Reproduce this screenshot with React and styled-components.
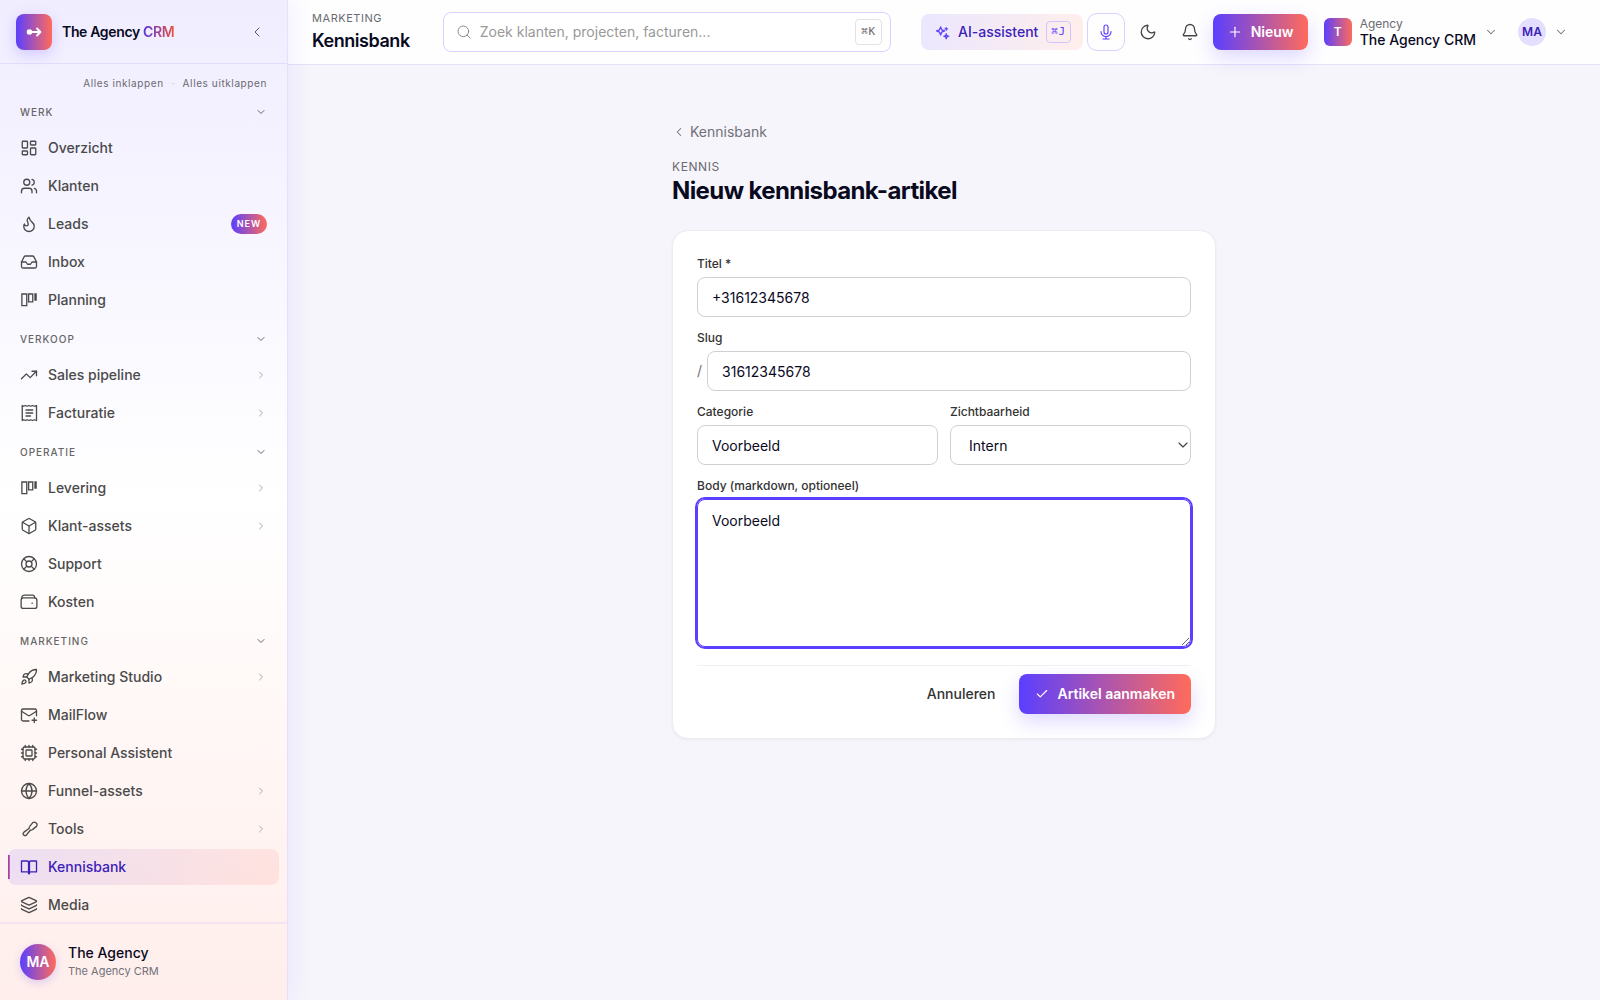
import React from "react";
import styled, { createGlobalStyle, css } from "styled-components";
import {
  Bell,
  Box,
  Check,
  ChevronDown,
  ChevronLeft,
  ChevronRight,
  Cpu,
  Flame,
  Globe,
  Inbox,
  Layers,
  LayoutDashboard,
  LifeBuoy,
  MailPlus,
  Moon,
  Plus,
  Rocket,
  Search,
  TrendingUp,
  Users,
} from "lucide-react";

const GlobalStyle = createGlobalStyle`
  *, *::before, *::after { box-sizing: border-box; }
  body {
    margin: 0;
    background: #f6f5fb;
    color: #0a0a1f;
    font-family: Inter, "Liberation Sans", sans-serif;
    font-size: 14px;
    line-height: 20px;
    -webkit-font-smoothing: antialiased;
  }
  button, input, select, textarea { font: inherit; color: inherit; margin: 0; }
  button { cursor: pointer; background: none; border: 0; padding: 0; }
  a { color: inherit; text-decoration: none; }
  svg { display: block; flex-shrink: 0; }
`;

const brand = "linear-gradient(90deg, #5b3fff 0%, #ff6b5b 100%)";

/* ---------- drawn icons ---------- */

function Glyph({ size = 18, strokeWidth = 1.5, children }) {
  return (
    <svg width={size} height={size} viewBox="0 0 24 24" fill="none" stroke="currentColor" strokeWidth={strokeWidth} strokeLinecap="round" strokeLinejoin="round" aria-hidden="true">
      {children}
    </svg>
  );
}

const Kanban = (p) => (
  <Glyph {...p}>
    <path d="M2.5 4h6.5v15.500h-6.500zM11.500 4h5.500v10.500h-5.500zM20 4h1.500v8h-1.500z" strokeLinejoin="miter" />
  </Glyph>
);

const Receipt = (p) => (
  <Glyph {...p}>
    <path d="M3 2l2 1 2.3-1 2.3 1L12 2l2.3 1 2.3-1 2.3 1L22 2v20l-3-1-2.3 1-2.4-1-2.3 1-2.4-1-2.3 1L5 21l-2 1z" />
    <path d="M8 8h9M8 12h9M8 16h6" />
  </Glyph>
);

const Wallet = (p) => (
  <Glyph {...p}>
    <rect x="1.500" y="6.500" width="21" height="14" rx="3" />
    <path d="M2.500 7A3.500 3.500 0 0 1 5.500 2.800h11A3 3 0 0 1 19.500 6.500M16 13.500h.5" />
  </Glyph>
);

const Tool = (p) => (
  <Glyph {...p}>
    <path d="M13 8.500l4-5a3.600 3.600 0 0 1 5 5l-5 4a3 3 0 0 1-3 .8L8.500 20a2.200 2.200 0 0 1-3.500-3.500l7.300-5.500a3 3 0 0 1 .7-2.500z" />
  </Glyph>
);

const Book = (p) => (
  <Glyph {...p}>
    <path d="M2 4h7.500a2.500 2.500 0 0 1 2.500 1.500 2.500 2.500 0 0 1 2.500-1.500H22v14.500h-7.500a2.500 2.500 0 0 0-2.500 1.500 2.500 2.500 0 0 0-2.500-1.500H2z" />
    <path d="M12 5.500v15" strokeWidth="3" />
  </Glyph>
);

const Sparkle = (p) => (
  <Glyph {...p}>
    <path d="M9 3l1.800 4.700L15.500 9.500l-4.700 1.800L9 16l-1.800-4.700L2.500 9.500l4.700-1.800z" />
    <path d="M18 14l1 3 3 1-3 1-1 3-1-3-3-1 3-1zM18 4v4M16 6h4" />
  </Glyph>
);

const Mic = (p) => (
  <Glyph {...p}>
    <rect x="9" y="1.500" width="6" height="13.500" rx="3" />
    <path d="M4.500 11.500a7.500 7.500 0 0 0 15 0M12 19v3.500M7.500 22.500h9" />
  </Glyph>
);

/* ---------- shell ---------- */

const Shell = styled.div`
  display: grid;
  grid-template-columns: 288px minmax(0, 1fr);
  height: 100vh;
`;

const Sidebar = styled.aside`
  z-index: 1;
  display: flex;
  flex-direction: column;
  min-height: 0;
  border-right: 1px solid #e6e0fd;
  background: linear-gradient(180deg, #f0edff 0%, #ffffff 50%, #ffeeeb 100%);
  box-shadow: 4px 0 24px rgba(91, 63, 255, 0.08);
`;

const BrandBar = styled.div`
  display: flex;
  align-items: center;
  gap: 10px;
  flex: none;
  height: 64px;
  padding: 0 24px 0 16px;
  border-bottom: 1px solid #e2dcff;
`;

const LogoTile = styled.span`
  display: grid;
  place-items: center;
  width: 36px;
  height: 36px;
  border-radius: 8px;
  background: ${brand};
  color: #fff;
  box-shadow: 0 4px 14px rgba(91, 63, 255, 0.22);
`;

const BrandName = styled.span`
  flex: 1;
  font-weight: 600;
  letter-spacing: -0.025em;
  span {
    background: linear-gradient(90deg, #5235e0, #e8533f);
    background-clip: text;
    color: transparent;
  }
`;

const CollapseButton = styled.button`
  display: grid;
  place-items: center;
  width: 14px;
  height: 24px;
  color: #555;
`;

const Nav = styled.nav`
  flex: 1;
  min-height: 0;
  overflow: hidden;
  padding: 0 8px;
`;

const FoldLinks = styled.div`
  display: flex;
  justify-content: flex-end;
  gap: 8px;
  padding: 12px 12px 8px;
  color: #c9c4d8;
  font-size: 10px;
  line-height: 14px;
  button {
    color: #6a6a70;
    letter-spacing: 0.06em;
  }
`;

const Section = styled.section`
  & + & {
    margin-top: 7px;
  }
`;

const SectionToggle = styled.button`
  display: flex;
  align-items: center;
  justify-content: space-between;
  width: 100%;
  height: 28px;
  margin-bottom: 4px;
  padding: 0 12px;
  color: #666;
  font-size: 10px;
  font-weight: 500;
  letter-spacing: 0.1em;
  text-transform: uppercase;
`;

const Items = styled.ul`
  display: grid;
  gap: 2px;
  margin: 0;
  padding: 0;
  list-style: none;
`;

const Item = styled.a`
  display: flex;
  align-items: center;
  gap: 10px;
  height: 36px;
  padding: 0 12px;
  border-radius: 8px;
  color: #4a4a4a;
  font-weight: 500;

  ${(p) =>
    p.$active &&
    css`
      position: relative;
      color: #3b22b8;
      background: linear-gradient(100deg, rgba(91, 63, 255, 0.11), rgba(255, 107, 91, 0.12));
      &::before {
        content: "";
        position: absolute;
        left: 0;
        top: 6px;
        bottom: 6px;
        width: 2px;
        background: ${brand};
      }
    `}
`;

const ItemLabel = styled.span`
  flex: 1;
`;

const ItemChevron = styled(ChevronRight)`
  color: #aaa;
`;

const NewBadge = styled.span`
  height: 20px;
  padding: 0 6px;
  border-radius: 10px;
  background: ${brand};
  color: #fff;
  font-size: 9px;
  font-weight: 600;
  letter-spacing: 0.1em;
`;

const Account = styled.div`
  display: flex;
  align-items: center;
  gap: 12px;
  flex: none;
  height: 78px;
  padding: 0 20px;
  border-top: 2px solid #f5e4f0;
`;

const Avatar = styled.span`
  display: grid;
  place-items: center;
  width: 36px;
  height: 36px;
  border-radius: 50%;
  background: ${brand};
  color: #fff;
  font-weight: 600;
  box-shadow: 0 3px 10px rgba(91, 63, 255, 0.2);
`;

const AccountText = styled.div`
  display: grid;
  font-weight: 500;
  line-height: 18px;
  small {
    color: #71717a;
    font-size: 11px;
    font-weight: 400;
  }
`;

/* ---------- top bar ---------- */

const Column = styled.div`
  display: flex;
  flex-direction: column;
  min-width: 0;
`;

const TopBar = styled.header`
  display: flex;
  align-items: center;
  flex: none;
  height: 65px;
  padding: 0 24px;
  border-bottom: 1px solid #e6e2fb;
  background: #fefeff;
`;

const Crumb = styled.div`
  margin-right: 33px;
`;

const Eyebrow = styled.p`
  margin: 0;
  color: #6a6a70;
  font-size: ${(p) => (p.$small ? 11 : 12)}px;
  line-height: 18px;
  letter-spacing: 0.05em;
  text-transform: uppercase;
`;

const CrumbTitle = styled.p`
  margin: 0;
  font-size: 18px;
  font-weight: 600;
  line-height: 28px;
  letter-spacing: -0.025em;
`;

const SearchBox = styled.label`
  display: flex;
  align-items: center;
  gap: 8px;
  flex: 0 1 448px;
  height: 40px;
  padding: 0 8px 0 12px;
  border: 1px solid #d9d1ff;
  border-radius: 8px;
  background: #fff;
  color: #8c8c92;
  input {
    flex: 1;
    min-width: 0;
    padding: 0;
    border: 0;
    outline: 0;
    background: transparent;
  }
  input::placeholder {
    color: #999;
    opacity: 1;
  }
`;

const Kbd = styled.kbd`
  display: grid;
  place-items: center;
  height: ${(p) => (p.$tinted ? 22 : 26)}px;
  padding: 0 ${(p) => (p.$tinted ? 4 : 5)}px;
  border: 1px solid ${(p) => (p.$tinted ? "#cfc6fb" : "#e2e2e6")};
  border-radius: 4px;
  color: ${(p) => (p.$tinted ? "#5b3fff" : "#666")};
  font-family: "DejaVu Sans Mono", "Liberation Mono", monospace;
  font-size: 11px;
  line-height: 16px;
  letter-spacing: 0.05em;
`;

const Actions = styled.div`
  display: flex;
  align-items: center;
  gap: 4px;
  margin-left: auto;
`;

const AssistantButton = styled.button`
  display: flex;
  align-items: center;
  gap: 8px;
  height: 36px;
  padding: 0 12px 0 14px;
  border-radius: 8px;
  background: linear-gradient(100deg, #ebe7ff, #ffeeeb);
  color: #3b22b8;
  font-weight: 500;
  svg { color: #5b3fff; }
`;

const IconButton = styled.button`
  display: grid;
  place-items: center;
  width: 38px;
  height: 38px;
  border: 1px solid ${(p) => (p.$outlined ? "#d9d1ff" : "transparent")};
  border-radius: 10px;
  color: ${(p) => (p.$outlined ? "#5b3fff" : "#444")};
`;

const PrimaryButton = styled.button`
  display: flex;
  align-items: center;
  gap: 8px;
  height: ${(p) => (p.$large ? 40 : 36)}px;
  padding: 0 ${(p) => (p.$large ? 16 : 14)}px;
  border-radius: 8px;
  background: ${brand};
  color: #fff;
  font-weight: 600;
  box-shadow: 0 8px 20px rgba(91, 63, 255, 0.2);
`;

const MenuButton = styled.button`
  display: flex;
  align-items: center;
  gap: 8px;
  padding: 0 8px;
  text-align: left;
  svg { color: #71717a; }
`;

const TenantButton = styled(MenuButton)`
  margin-left: 4px;
`;

const TenantTile = styled.span`
  display: grid;
  place-items: center;
  width: 28px;
  height: 28px;
  border-radius: 6px;
  background: ${brand};
  color: #fff;
  font-size: 12px;
  font-weight: 600;
`;

const TenantText = styled.span`
  display: grid;
  font-weight: 500;
  line-height: 16px;
  small {
    color: #6a6a70;
    font-size: 12px;
    font-weight: 400;
  }
`;

const UserTile = styled(TenantTile)`
  border-radius: 50%;
  background: #e4deff;
  color: #3b22b8;
`;

/* ---------- form page ---------- */

const Page = styled.main`
  width: 100%;
  max-width: 544px;
  margin: 0 auto;
  padding-top: 57px;
`;

const BackLink = styled.a`
  display: inline-flex;
  align-items: center;
  gap: 4px;
  margin-bottom: 16px;
  color: #71717a;
`;

const PageTitle = styled.h1`
  margin: 0 0 24px;
  font-size: 24px;
  font-weight: 700;
  line-height: 30px;
  letter-spacing: -0.025em;
`;

const Card = styled.form`
  display: grid;
  gap: 12px;
  padding: 24px;
  border: 1px solid #ececf1;
  border-radius: 16px;
  background: #fff;
  box-shadow: 0 1px 3px rgba(10, 10, 31, 0.05);
`;

const FieldGroup = styled.div`
  display: grid;
  gap: 4px;
`;

const FieldRow = styled.div`
  display: grid;
  grid-template-columns: 1fr 1fr;
  gap: 12px;
`;

const Label = styled.label`
  color: #333;
  font-size: 12px;
  font-weight: 500;
  line-height: 18px;
`;

const control = css`
  width: 100%;
  border: 1px solid #d0d0d5;
  border-radius: 8px;
  background: #fff;
  outline: 0;
`;

const TextInput = styled.input`
  ${control}
  height: 40px;
  padding: 0 14px;
`;

const SlugRow = styled.div`
  display: flex;
  align-items: center;
  gap: 5px;
  color: #71717a;
  input { color: #0a0a1f; }
`;

const SelectWrap = styled.div`
  display: grid;
  align-items: center;
  > * { grid-area: 1 / 1; }
  svg {
    justify-self: end;
    color: #444;
    pointer-events: none;
  }
`;

const Select = styled.select`
  ${control}
  height: 40px;
  padding: 1px 18px 0;
  appearance: none;
`;

const TextArea = styled.textarea`
  ${control}
  display: block;
  height: 148px;
  padding: 11px 14px;
  resize: vertical;
  border-color: #5b3fff;
  outline: 2px solid #5b3fff;
`;

const FormActions = styled.div`
  display: flex;
  justify-content: flex-end;
  gap: 8px;
  margin-top: 6px;
  padding-top: 8px;
  border-top: 1px solid #f1f1f4;
`;

const GhostButton = styled.button`
  height: 40px;
  padding: 0 16px;
  color: #333;
  font-weight: 500;
`;

const sections = [
  {
    title: "Werk",
    items: [
      { label: "Overzicht", icon: LayoutDashboard },
      { label: "Klanten", icon: Users },
      { label: "Leads", icon: Flame, badge: "NEW" },
      { label: "Inbox", icon: Inbox },
      { label: "Planning", icon: Kanban },
    ],
  },
  {
    title: "Verkoop",
    items: [
      { label: "Sales pipeline", icon: TrendingUp, more: true },
      { label: "Facturatie", icon: Receipt, more: true },
    ],
  },
  {
    title: "Operatie",
    items: [
      { label: "Levering", icon: Kanban, more: true },
      { label: "Klant-assets", icon: Box, more: true },
      { label: "Support", icon: LifeBuoy },
      { label: "Kosten", icon: Wallet },
    ],
  },
  {
    title: "Marketing",
    items: [
      { label: "Marketing Studio", icon: Rocket, more: true },
      { label: "MailFlow", icon: MailPlus },
      { label: "Personal Assistent", icon: Cpu },
      { label: "Funnel-assets", icon: Globe, more: true },
      { label: "Tools", icon: Tool, more: true },
      { label: "Kennisbank", icon: Book, active: true },
      { label: "Media", icon: Layers },
    ],
  },
];

function NavItem({ label, icon: Icon, badge, more, active }) {
  return (
    <li>
      <Item href="#" $active={active} aria-current={active ? "page" : undefined}>
        <Icon size={18} strokeWidth={1.75} />
        <ItemLabel>{label}</ItemLabel>
        {badge && <NewBadge>{badge}</NewBadge>}
        {more && <ItemChevron size={12} strokeWidth={2} />}
      </Item>
    </li>
  );
}

export default function App() {
  return (
    <>
      <GlobalStyle />
      <Shell>
        <Sidebar>
          <BrandBar>
            <LogoTile>
              <svg width="16" height="16" viewBox="0 0 16 16" fill="none" stroke="#fff" strokeWidth="1.8" strokeLinecap="round" strokeLinejoin="round" aria-hidden="true">
                <circle cx="3.500" cy="8" r="2.800" fill="#fff" stroke="none" />
                <path d="M5 8h9.500M11 4.500L14.500 8 11 11.500" />
              </svg>
            </LogoTile>
            <BrandName>
              The Agency <span>CRM</span>
            </BrandName>
            <CollapseButton type="button" aria-label="Menu inklappen">
              <ChevronLeft size={16} strokeWidth={1.5} />
            </CollapseButton>
          </BrandBar>
          <Nav>
            <FoldLinks>
              <button type="button">Alles inklappen</button>
              <span>·</span>
              <button type="button">Alles uitklappen</button>
            </FoldLinks>
            {sections.map((section) => (
              <Section key={section.title}>
                <SectionToggle type="button">
                  {section.title}
                  <ChevronDown size={12} strokeWidth={2} />
                </SectionToggle>
                <Items>
                  {section.items.map((item) => (
                    <NavItem key={item.label} {...item} />
                  ))}
                </Items>
              </Section>
            ))}
          </Nav>
          <Account>
            <Avatar>MA</Avatar>
            <AccountText>
              The Agency
              <small>The Agency CRM</small>
            </AccountText>
          </Account>
        </Sidebar>

        <Column>
          <TopBar>
            <Crumb>
              <Eyebrow $small>Marketing</Eyebrow>
              <CrumbTitle>Kennisbank</CrumbTitle>
            </Crumb>
            <SearchBox>
              <Search size={16} strokeWidth={1.5} />
              <input type="text" aria-label="Zoeken" placeholder="Zoek klanten, projecten, facturen..." />
              <Kbd>⌘K</Kbd>
            </SearchBox>
            <Actions>
              <AssistantButton type="button">
                <Sparkle size={15} strokeWidth={2} />
                AI-assistent
                <Kbd $tinted>⌘J</Kbd>
              </AssistantButton>
              <IconButton type="button" $outlined aria-label="Spraak">
                <Mic size={16} strokeWidth={1.75} />
              </IconButton>
              <IconButton type="button" aria-label="Donkere modus">
                <Moon size={18} strokeWidth={1.75} />
              </IconButton>
              <IconButton type="button" aria-label="Meldingen">
                <Bell size={18} strokeWidth={1.75} />
              </IconButton>
              <PrimaryButton type="button">
                <Plus size={16} strokeWidth={1.75} />
                Nieuw
              </PrimaryButton>
              <TenantButton type="button">
                <TenantTile>T</TenantTile>
                <TenantText>
                  <small>Agency</small>
                  The Agency CRM
                </TenantText>
                <ChevronDown size={14} strokeWidth={1.75} />
              </TenantButton>
              <MenuButton type="button" aria-label="Gebruikersmenu">
                <UserTile>MA</UserTile>
                <ChevronDown size={14} strokeWidth={1.75} />
              </MenuButton>
            </Actions>
          </TopBar>

          <Page>
            <BackLink href="#">
              <ChevronLeft size={14} strokeWidth={1.75} />
              Kennisbank
            </BackLink>
            <Eyebrow>Kennis</Eyebrow>
            <PageTitle>Nieuw kennisbank-artikel</PageTitle>
            <Card onSubmit={(e) => e.preventDefault()}>
              <FieldGroup>
                <Label htmlFor="titel">Titel *</Label>
                <TextInput id="titel" type="text" defaultValue="+31612345678" />
              </FieldGroup>
              <FieldGroup>
                <Label htmlFor="slug">Slug</Label>
                <SlugRow>
                  /
                  <TextInput id="slug" type="text" defaultValue="31612345678" />
                </SlugRow>
              </FieldGroup>
              <FieldRow>
                <FieldGroup>
                  <Label htmlFor="categorie">Categorie</Label>
                  <TextInput id="categorie" type="text" defaultValue="Voorbeeld" />
                </FieldGroup>
                <FieldGroup>
                  <Label htmlFor="zichtbaarheid">Zichtbaarheid</Label>
                  <SelectWrap>
                    <Select id="zichtbaarheid" defaultValue="intern">
                      <option value="intern">Intern</option>
                    </Select>
                    <ChevronDown size={16} strokeWidth={1.75} />
                  </SelectWrap>
                </FieldGroup>
              </FieldRow>
              <FieldGroup>
                <Label htmlFor="body">Body (markdown, optioneel)</Label>
                <TextArea id="body" defaultValue="Voorbeeld" />
              </FieldGroup>
              <FormActions>
                <GhostButton type="button">Annuleren</GhostButton>
                <PrimaryButton type="submit" $large>
                  <Check size={14} strokeWidth={2} />
                  Artikel aanmaken
                </PrimaryButton>
              </FormActions>
            </Card>
          </Page>
        </Column>
      </Shell>
    </>
  );
}
